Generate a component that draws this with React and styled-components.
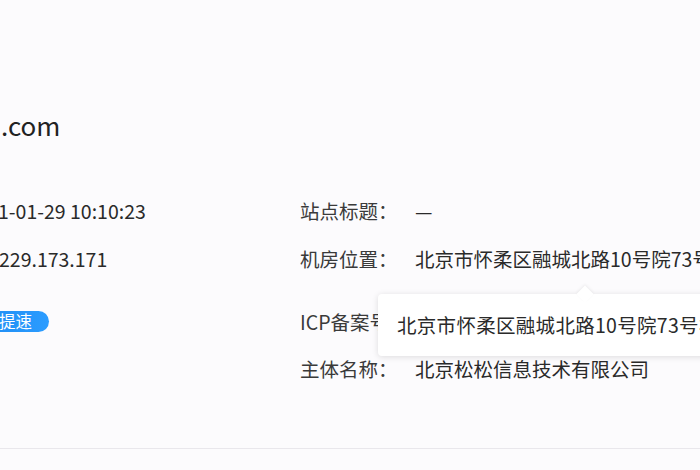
import React from "react";
import styled, { createGlobalStyle } from "styled-components";

const Global = createGlobalStyle`
  html, body { margin: 0; padding: 0; }
  body {
    background: #fcfbfd;
    font-family: "Noto Sans CJK SC", "Noto Sans", sans-serif;
    overflow: hidden;
  }
`;

const Page = styled.div`
  width: 700px;
  height: 470px;
  display: flex;
  flex-direction: column;
  overflow: hidden;
  background: #fcfbfd;
  color: #333;
`;

const Domain = styled.div`
  margin-top: 106px;
  height: 38px;
  line-height: 38px;
  font-size: 26px;
  color: #222;
  padding-left: 1px;
  white-space: nowrap;
`;

const Body = styled.div`
  display: grid;
  grid-template-columns: 300px 1fr;
  margin-top: 52px;
`;

const Column = styled.div`
  display: flex;
  flex-direction: column;
`;

const Line = styled.div`
  height: 30px;
  line-height: 30px;
  margin-top: ${(p) => p.$gap || 0}px;
  font-size: 19.5px;
  color: #2a2a2a;
  white-space: nowrap;
  margin-left: ${(p) => p.$shift || 0}px;
`;

const Badge = styled.span`
  display: inline-flex;
  align-items: center;
  height: 21px;
  padding: 0 17px 0 12px;
  margin-left: -46px;
  border-radius: 11px;
  background: linear-gradient(90deg, #1a86ee, #2b9cff);
  color: #fff;
  font-size: 16.5px;
  line-height: 21px;
  white-space: nowrap;
`;

const BadgeLine = styled.div`
  height: 30px;
  margin-top: ${(p) => p.$gap || 0}px;
  display: flex;
  align-items: center;
`;

const Field = styled.div`
  position: relative;
  display: grid;
  grid-template-columns: 115px auto;
  height: 30px;
  line-height: 30px;
  margin-top: ${(p) => p.$gap || 0}px;
  font-size: 19.5px;
  white-space: nowrap;
`;

const Label = styled.span`
  color: #3a3a3a;
`;

const Value = styled.span`
  color: #2a2a2a;
`;

const Tooltip = styled.div`
  position: absolute;
  left: 78px;
  top: 50px;
  height: 62px;
  width: 360px;
  box-sizing: border-box;
  padding-left: 19px;
  display: flex;
  align-items: center;
  background: #fff;
  border-radius: 4px;
  box-shadow: 0 1px 6px rgba(0, 0, 0, 0.13);
  color: #2a2a2a;
  font-size: 19.5px;
  letter-spacing: 0.3px;
  z-index: 2;

  &::before {
    content: "";
    position: absolute;
    top: -6px;
    left: 201px;
    width: 12px;
    height: 12px;
    background: #fff;
    transform: rotate(45deg);
    box-shadow: -1px -1px 3px rgba(0, 0, 0, 0.06);
  }
`;

const TooltipText = styled.span`
  position: relative;
`;

const Footer = styled.div`
  margin-top: auto;
  height: 21px;
  border-top: 1px solid #e9e7ec;
`;

export default function App() {
  const address = "北京市怀柔区融城北路10号院73号楼";
  return (
    <>
      <Global />
      <Page>
        <Domain>.com</Domain>
        <Body>
          <Column>
            <Line $gap={0} $shift={-2}>1-01-29 10:10:23</Line>
            <Line $gap={18} $shift={-1}>229.173.171</Line>
            <BadgeLine $gap={32}>
              <Badge>立即提速</Badge>
            </BadgeLine>
          </Column>
          <Column>
            <Field $gap={0}>
              <Label>站点标题：</Label>
              <Value>—</Value>
            </Field>
            <Field $gap={18}>
              <Label>机房位置：</Label>
              <Value>{address}</Value>
              <Tooltip>
                <TooltipText>{address}</TooltipText>
              </Tooltip>
            </Field>
            <Field $gap={33}>
              <Label>ICP备案号：</Label>
              <Value>京ICP备12345678号</Value>
            </Field>
            <Field $gap={17}>
              <Label>主体名称：</Label>
              <Value>北京松松信息技术有限公司</Value>
            </Field>
          </Column>
        </Body>
        <Footer />
      </Page>
    </>
  );
}
